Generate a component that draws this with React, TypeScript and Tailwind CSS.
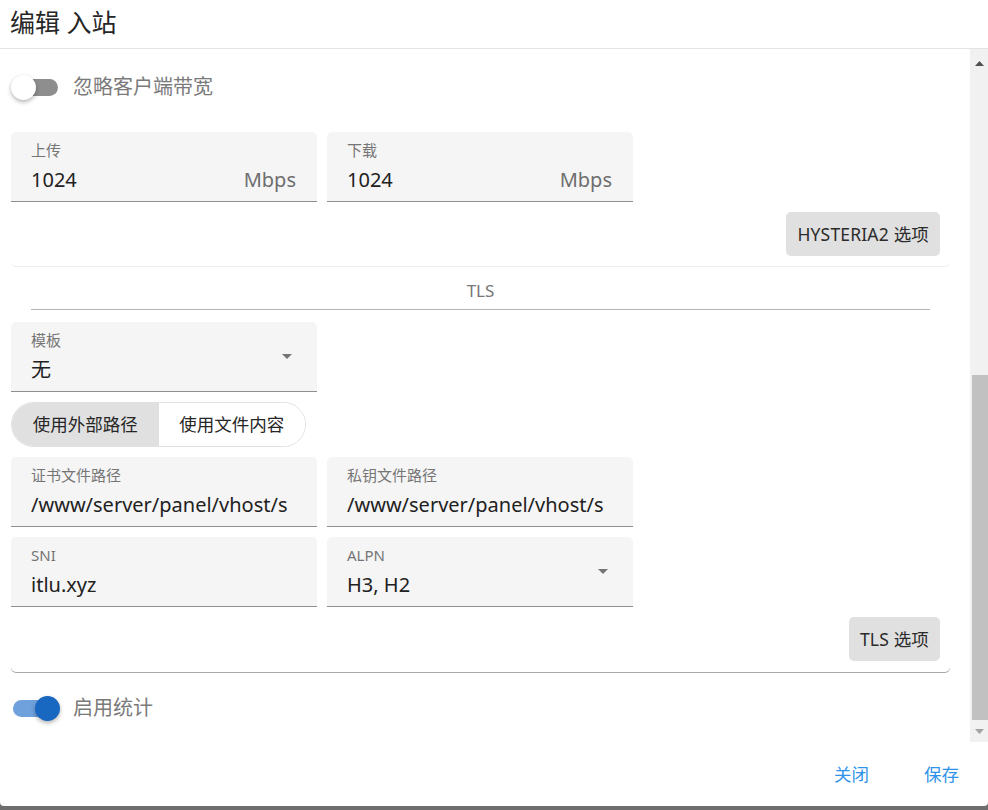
import { useState } from 'react'

// Campo de texto relleno (estilo filled)
function FilledField({
  label,
  value,
  suffix,
  select = false,
}: {
  label: string
  value: string
  suffix?: string
  select?: boolean
}) {
  return (
    <div className="flex h-[70px] w-[306px] items-center rounded-t-[5px] border-b border-[#8f8f8f] bg-[#f5f5f5] pl-[20px] pr-[21px]">
      <div className="flex min-w-0 flex-1 flex-col">
        <span className="text-[15px] leading-[18px] text-[#757575]">{label}</span>
        <div className="mt-[8px] flex items-center justify-between">
          <span className="whitespace-nowrap text-[20px] leading-[26px] text-[#212121]">{value}</span>
          {suffix && <span className="text-[20px] leading-[26px] text-[#6e6e6e]">{suffix}</span>}
        </div>
      </div>
      {select && (
        <svg width="10" height="5" viewBox="0 0 10 5" className="ml-2 mr-[4px]">
          <path d="M0 0 L10 0 L5 5 Z" fill="#757575" />
        </svg>
      )}
    </div>
  )
}

// Interruptor
function Switch({ on, label }: { on: boolean; label: string }) {
  return (
    <div className="flex items-center">
      <div className="relative h-[25px] w-[49px]">
        <div
          className={`absolute left-[2px] top-[4px] h-[17px] w-[45px] rounded-full ${
            on ? 'bg-[#6fa1dc]' : 'bg-[#8e8e8e]'
          }`}
        />
        <div
          className={`absolute top-0 h-[25px] w-[25px] rounded-full shadow-[0_2px_4px_rgba(0,0,0,0.3)] ${
            on ? 'left-[24px] bg-[#1867c0]' : 'left-0 bg-white'
          }`}
        />
      </div>
      <span className="ml-[13px] text-[20px] leading-[26px] text-[#7a7a7a]">{label}</span>
    </div>
  )
}

function GrayButton({ children }: { children: string }) {
  return (
    <button
      type="button"
      className="flex h-[44px] items-center rounded-[5px] bg-[#e0e0e0] px-[11px] text-[17.5px] tracking-[0.01em] text-[#2b2b2b]"
    >
      {children}
    </button>
  )
}

export default function App() {
  const [mode, setMode] = useState<'path' | 'content'>('path')

  return (
    <div className="h-[810px] w-[988px] bg-[#6e6e6e] font-['Noto_Sans','Noto_Sans_CJK_SC',sans-serif]">
      <div className="flex h-[806px] flex-col rounded-b-[4px] bg-white">
        {/* Header */}
        <div className="flex h-[49px] items-center border-b border-[#e3e3e3] pl-[10px] pb-[5px]">
          <h1 className="text-[25px] leading-[30px] text-[#262626]">编辑 入站</h1>
        </div>

        {/* Cuerpo con scroll */}
        <div className="flex h-[693px]">
          <div className="flex-1 overflow-hidden pl-[11px]">
            <div className="w-[939px] rounded-b-[5px] pb-[10px] shadow-[0_1px_0_#eeeeee]">
              <div className="pt-[25px]">
                <Switch on={false} label="忽略客户端带宽" />
              </div>
              <div className="mt-[32px] flex gap-[10px]">
                <FilledField label="上传" value="1024" suffix="Mbps" />
                <FilledField label="下载" value="1024" suffix="Mbps" />
              </div>
              <div className="mt-[10px] flex justify-end pr-[10px]">
                <GrayButton>HYSTERIA2 选项</GrayButton>
              </div>
            </div>

            <div className="w-[939px] rounded-b-[5px] shadow-[0_1px_0_#a9a9a9]">
              {/* Divisor TLS */}
              <div className="mx-[20px] pt-[13px]">
                <div className="text-center text-[17px] leading-[24px] text-[#767676]">TLS</div>
                <div className="mt-[6px] h-px bg-[#b5b5b5]" />
              </div>

              <div className="mt-[12px]">
                <FilledField label="模板" value="无" select />
              </div>

              <div className="mt-[10px] flex h-[45px] w-[295px] overflow-hidden rounded-full border border-[#e0e0e0] text-[17.5px] text-[#262626]">
                <button
                  type="button"
                  onClick={() => setMode('path')}
                  className={`flex-1 ${mode === 'path' ? 'bg-[#e0e0e0]' : 'bg-white'}`}
                >
                  使用外部路径
                </button>
                <button
                  type="button"
                  onClick={() => setMode('content')}
                  className={`flex-1 ${mode === 'content' ? 'bg-[#e0e0e0]' : 'bg-white'}`}
                >
                  使用文件内容
                </button>
              </div>

              <div className="mt-[10px] flex gap-[10px]">
                <FilledField label="证书文件路径" value="/www/server/panel/vhost/s" />
                <FilledField label="私钥文件路径" value="/www/server/panel/vhost/s" />
              </div>
              <div className="mt-[10px] flex gap-[10px]">
                <FilledField label="SNI" value="itlu.xyz" />
                <FilledField label="ALPN" value="H3, H2" select />
              </div>

              <div className="flex justify-end pb-[11px] pr-[10px] pt-[10px]">
                <GrayButton>TLS 选项</GrayButton>
              </div>
            </div>

            <div className="mt-[23px]">
              <Switch on label="启用统计" />
            </div>
          </div>

          {/* Barra de scroll */}
          <div className="flex w-[18px] flex-col bg-[#f1f1f1]">
            <div className="flex h-[17px] items-end justify-center">
              <svg width="9" height="5" viewBox="0 0 9 5">
                <path d="M0 5 L9 5 L4.5 0 Z" fill="#505050" />
              </svg>
            </div>
            <div className="h-[309px]" />
            <div className="ml-[2px] h-[345px] bg-[#c1c1c1]" />
            <div className="flex flex-1 items-center justify-center">
              <svg width="9" height="5" viewBox="0 0 9 5">
                <path d="M0 0 L9 0 L4.5 5 Z" fill="#a3a3a3" />
              </svg>
            </div>
          </div>
        </div>

        {/* Footer */}
        <div className="flex flex-1 items-center justify-end gap-[55px] pr-[29px]">
          <button type="button" className="text-[17.5px] leading-[24px] text-[#2f93ea]">关闭</button>
          <button type="button" className="text-[17.5px] leading-[24px] text-[#2f93ea]">保存</button>
        </div>
      </div>
    </div>
  )
}
